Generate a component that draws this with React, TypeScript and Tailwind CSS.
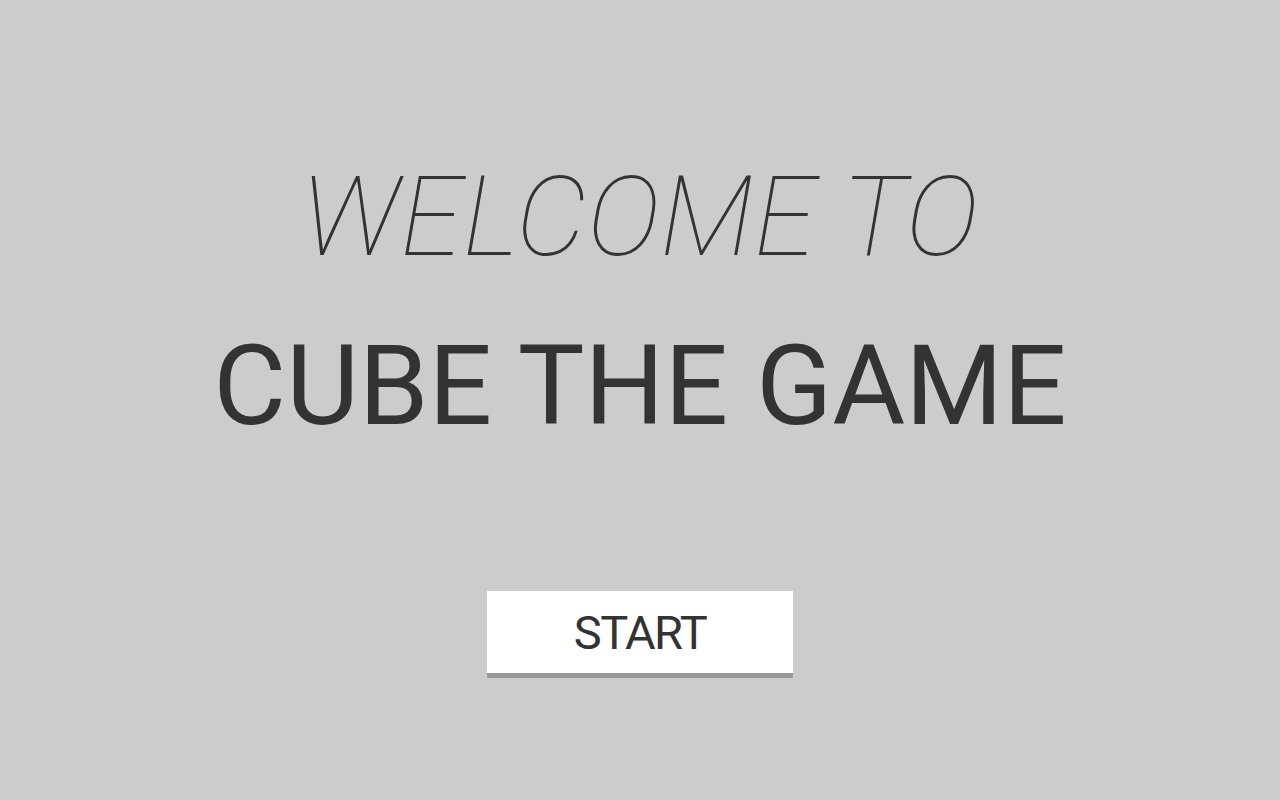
import React from 'react';

export default function App() {
    return (
        <div
            className="w-full h-[800px] bg-[#cccccc] flex flex-col items-center pt-[161px] text-[#333333]"
            style={{ fontFamily: 'Roboto, "Liberation Sans", sans-serif' }}
        >
            <h1 className="text-[112px] leading-none font-thin italic tracking-[0.7px]">WELCOME TO</h1>
            <h2 className="mt-[57px] text-[112px] leading-none font-normal">CUBE THE GAME</h2>
            <button className="mt-[149px] w-[306px] h-[87px] bg-white border-b-[5px] border-[#999999] text-[47px] leading-none tracking-[-1.5px] text-[#333333] flex items-center justify-center">
                START
            </button>
        </div>
    );
}
